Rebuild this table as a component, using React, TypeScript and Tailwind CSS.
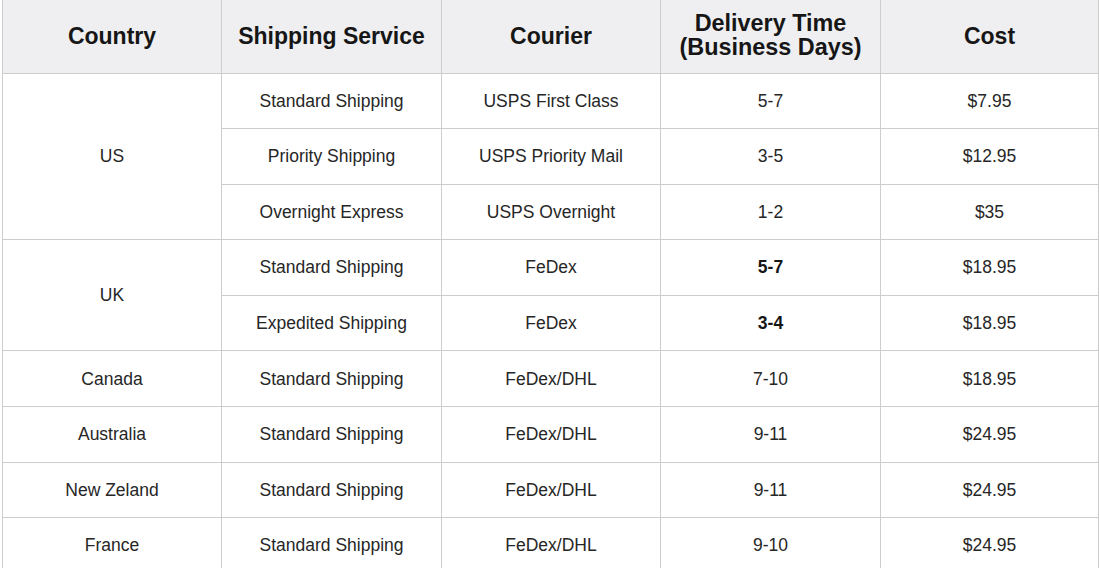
import React from "react";

type Row = { country?: string; span?: number; service: string; courier: string; time: string; bold?: boolean; cost: string };

const rows: Row[] = [
  { country: "US", span: 3, service: "Standard Shipping", courier: "USPS First Class", time: "5-7", cost: "$7.95" },
  { service: "Priority Shipping", courier: "USPS Priority Mail", time: "3-5", cost: "$12.95" },
  { service: "Overnight Express", courier: "USPS Overnight", time: "1-2", cost: "$35" },
  { country: "UK", span: 2, service: "Standard Shipping", courier: "FeDex", time: "5-7", bold: true, cost: "$18.95" },
  { service: "Expedited Shipping", courier: "FeDex", time: "3-4", bold: true, cost: "$18.95" },
  { country: "Canada", span: 1, service: "Standard Shipping", courier: "FeDex/DHL", time: "7-10", cost: "$18.95" },
  { country: "Australia", span: 1, service: "Standard Shipping", courier: "FeDex/DHL", time: "9-11", cost: "$24.95" },
  { country: "New Zeland", span: 1, service: "Standard Shipping", courier: "FeDex/DHL", time: "9-11", cost: "$24.95" },
  { country: "France", span: 1, service: "Standard Shipping", courier: "FeDex/DHL", time: "9-10", cost: "$24.95" },
];

const td = "border border-[#cdcdcd] text-center align-middle p-0";

export default function App() {
  return (
    <div className="w-[1099px] h-[568px] overflow-hidden bg-white pl-[2px]" style={{ fontFamily: '"Liberation Sans", Arial, sans-serif' }}>
      <table className="border-collapse table-fixed w-[1096px] text-[#262626]">
        <colgroup>
          <col className="w-[219px]" />
          <col className="w-[220px]" />
          <col className="w-[219px]" />
          <col className="w-[220px]" />
          <col className="w-[218px]" />
        </colgroup>
        <thead>
          <tr className="h-[73px] bg-[#efeff1]">
            <th className={`${td} border-t-0 text-[23px] font-bold text-[#161616] leading-[23px]`}>Country</th>
            <th className={`${td} border-t-0 text-[23px] font-bold text-[#161616] leading-[23px]`}>Shipping Service</th>
            <th className={`${td} border-t-0 text-[23px] font-bold text-[#161616] leading-[23px]`}>Courier</th>
            <th className={`${td} border-t-0 text-[23.4px] font-bold text-[#161616] leading-[24px] pb-[3px]`}>
              Delivery Time
              <br />
              (Business Days)
            </th>
            <th className={`${td} border-t-0 text-[23px] font-bold text-[#161616] leading-[23px]`}>Cost</th>
          </tr>
        </thead>
        <tbody className="text-[17.5px]">
          {rows.map((r, i) => (
            <tr key={i} className="h-[55.6px]">
              {r.country !== undefined && (
                <td rowSpan={r.span} className={td}>
                  {r.country}
                </td>
              )}
              <td className={td}>{r.service}</td>
              <td className={td}>{r.courier}</td>
              <td className={`${td} ${r.bold ? "font-bold text-[#161616]" : ""}`}>{r.time}</td>
              <td className={td}>{r.cost}</td>
            </tr>
          ))}
        </tbody>
      </table>
    </div>
  );
}
